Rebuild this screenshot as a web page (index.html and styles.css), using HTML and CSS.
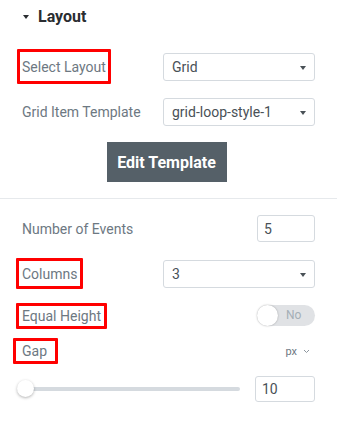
FILE: index.html
```html
<!DOCTYPE html>
<html lang="en">
<head>
    <meta charset="UTF-8">
    <title>Layout Controls</title>
    <link rel="stylesheet" href="styles.css">
</head>
<body>
    <div class="section-title">
        <span class="caret-down"></span>
        <span>Layout</span>
    </div>

    <div class="controls">
        <div class="control row-select-layout">
            <span class="label mark mark-lg">Select Layout</span>
            <div class="select">Grid<span class="arrow"></span></div>
        </div>

        <div class="control row-template">
            <span class="label">Grid Item Template</span>
            <div class="select">grid-loop-style-1<span class="arrow"></span></div>
        </div>

        <div class="button-wrap">
            <button class="btn-edit">Edit Template</button>
        </div>
    </div>

    <div class="divider"></div>

    <div class="controls">
        <div class="control row-events">
            <span class="label">Number of Events</span>
            <div class="number">5</div>
        </div>

        <div class="control row-columns">
            <span class="label mark mark-md">Columns</span>
            <div class="select">3<span class="arrow"></span></div>
        </div>

        <div class="control row-height">
            <span class="label mark">Equal Height</span>
            <div class="switch"><span class="knob"></span><span class="switch-text">No</span></div>
        </div>

        <div class="control row-gap">
            <span class="label mark mark-gap">Gap</span>
            <span class="units">px
                <svg width="7" height="5" viewBox="0 0 7 5"><path d="M1 1 L3.5 3.5 L6 1" fill="none" stroke="#8d969e" stroke-width="1"/></svg>
            </span>
        </div>

        <div class="control row-slider">
            <div class="slider"><span class="thumb"></span></div>
            <div class="number number-wide">10</div>
        </div>
    </div>
</body>
</html>
```

FILE: styles.css
```css
body {
    margin: 0;
    background: #fff;
    font-family: Roboto, "Liberation Sans", sans-serif;
    color: #6d7882;
    font-size: 14px;
}
.section-title {
    height: 32px;
    display: flex;
    align-items: center;
    gap: 9px;
    padding-left: 23px;
    font-size: 16px;
    font-weight: bold;
    color: #2a2d31;
}
.caret-down {
    width: 0;
    height: 0;
    border-left: 3.5px solid transparent;
    border-right: 3.5px solid transparent;
    border-top: 4px solid #2a2d31;
    margin-top: 1px;
}
.controls {
    padding: 0 22px;
}
.control {
    display: flex;
    align-items: center;
    justify-content: space-between;
}
.label {
    color: #6d7882;
}
.mark {
    position: relative;
}
.mark::after {
    content: "";
    position: absolute;
    top: -5px;
    bottom: -5px;
    left: -6px;
    right: -6px;
    border: 3px solid #f00;
    border-radius: 1px;
}
.mark-lg::after {
    top: -10px;
    bottom: -9px;
    left: -5px;
    right: -5px;
}
.mark-md::after {
    top: -8px;
    bottom: -7px;
}
.mark-gap::after {
    left: -9px;
    right: -11px;
}
.select {
    position: relative;
    box-sizing: border-box;
    width: 152px;
    height: 28px;
    border: 1px solid #d5dadf;
    border-radius: 3px;
    padding-left: 8px;
    display: flex;
    align-items: center;
    color: #495157;
}
.arrow {
    position: absolute;
    right: 8px;
    top: 12px;
    border-left: 3.5px solid transparent;
    border-right: 3.5px solid transparent;
    border-top: 4px solid #495157;
}
.row-select-layout {
    margin-top: 21px;
}
.row-template {
    margin-top: 17px;
}
.button-wrap {
    display: flex;
    justify-content: center;
    margin-top: 16px;
    padding-right: 4px;
}
.btn-edit {
    width: 120px;
    height: 40px;
    border: none;
    background: #556068;
    color: #fff;
    font-family: Roboto, "Liberation Sans", sans-serif;
    font-size: 16px;
    font-weight: bold;
}
.divider {
    height: 1px;
    background: #e6e9ec;
    margin-top: 16px;
}
.number {
    box-sizing: border-box;
    width: 58px;
    height: 27px;
    border: 1px solid #d5dadf;
    border-radius: 3px;
    padding-left: 6px;
    display: flex;
    align-items: center;
    color: #495157;
}
.number-wide {
    width: 60px;
    height: 26px;
}
.row-events {
    margin-top: 16px;
}
.row-columns {
    margin-top: 18px;
}
.row-height {
    margin-top: 17px;
}
.switch {
    position: relative;
    box-sizing: border-box;
    width: 58px;
    height: 21px;
    border-radius: 11px;
    background: #e0e2e5;
}
.knob {
    position: absolute;
    left: 0;
    top: 0;
    width: 21px;
    height: 21px;
    border-radius: 50%;
    background: #fff;
    box-shadow: 0 0 2px rgba(0, 0, 0, 0.3);
}
.switch-text {
    position: absolute;
    left: 29px;
    top: 3px;
    font-size: 12px;
    color: #a4afb7;
}
.row-gap {
    margin-top: 17px;
    height: 16px;
}
.units {
    display: flex;
    align-items: center;
    gap: 6px;
    font-size: 11px;
    color: #6d7882;
    padding-right: 5px;
}
.row-slider {
    margin-top: 17px;
}
.slider {
    position: relative;
    width: 223px;
    height: 4px;
    margin-left: -5px;
    border-radius: 2px;
    background: #d5dadf;
}
.thumb {
    position: absolute;
    left: 0;
    top: -7px;
    width: 17px;
    height: 17px;
    border-radius: 50%;
    background: #fff;
    box-shadow: 0 1px 3px rgba(0, 0, 0, 0.3);
}
```
